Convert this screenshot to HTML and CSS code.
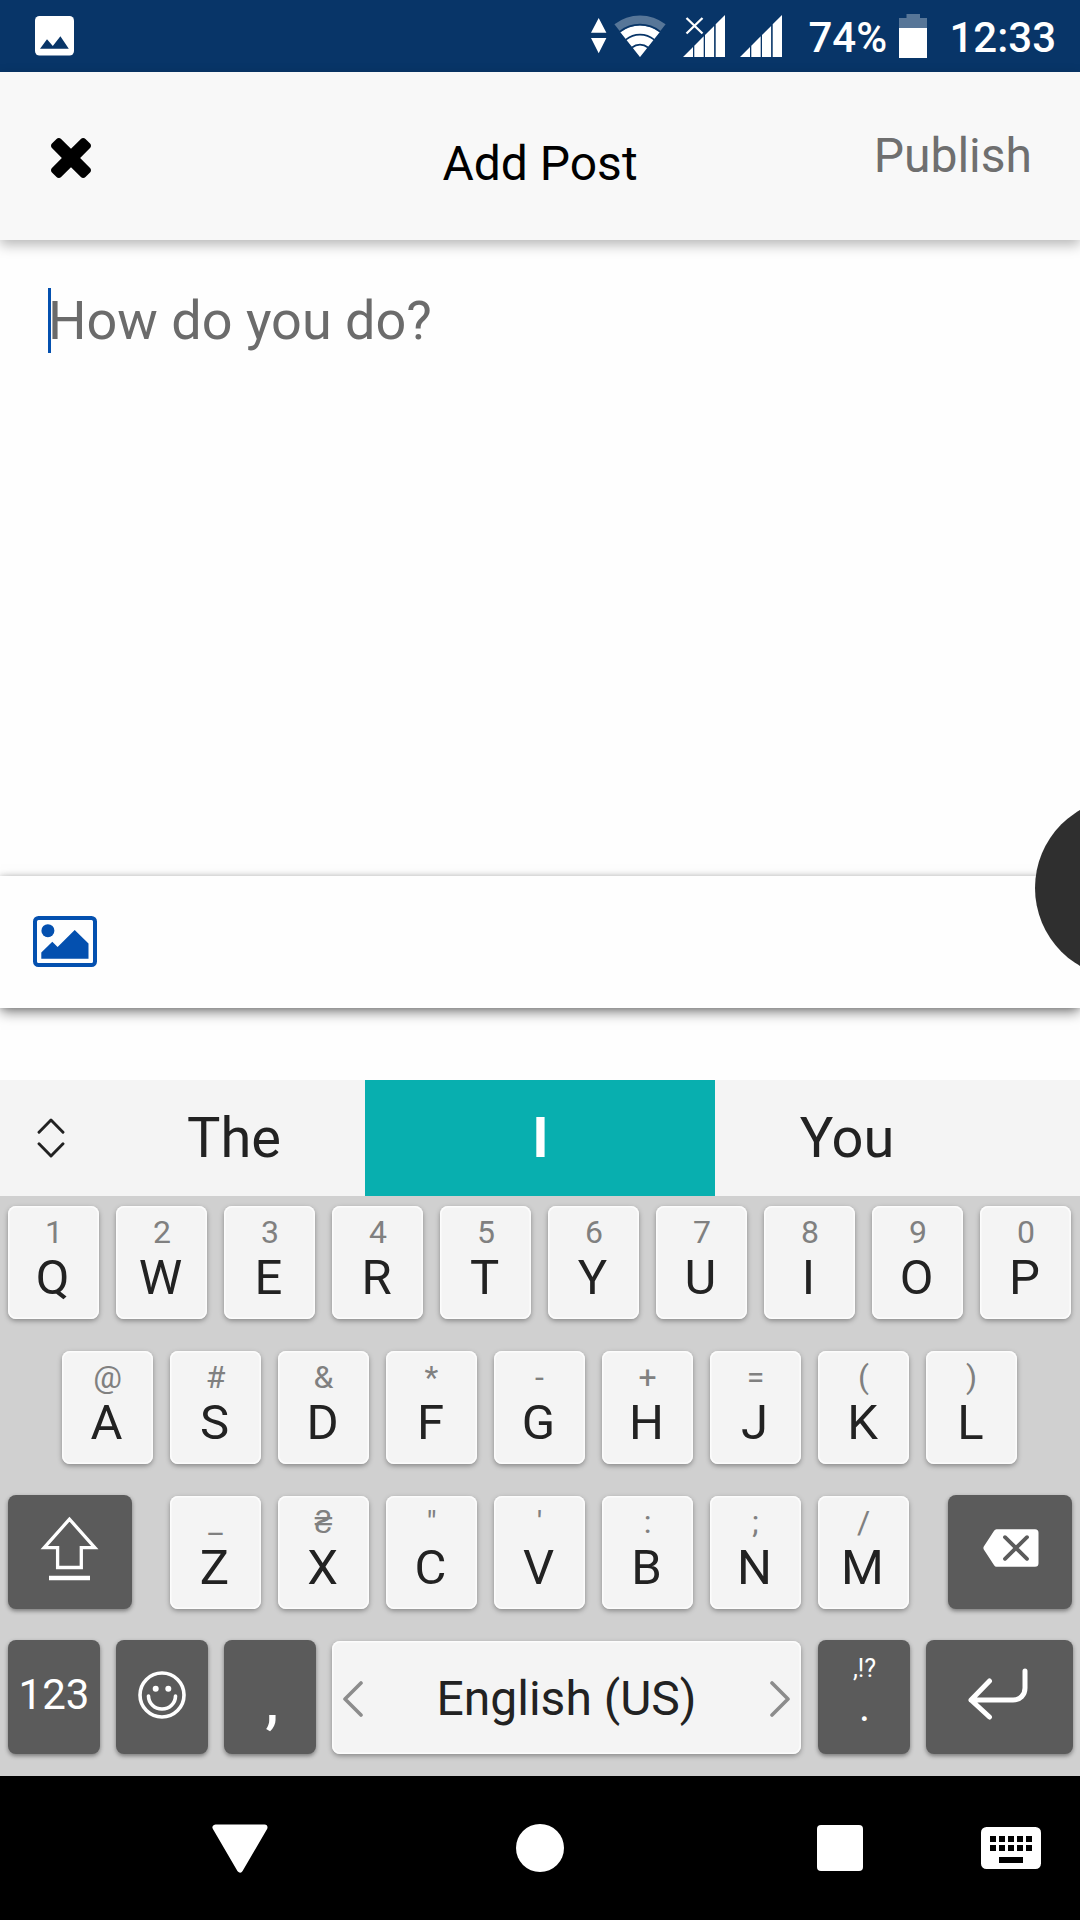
FILE: index.html
```html
<!DOCTYPE html>
<html lang="en">
<head>
<meta charset="utf-8">
<title>Add Post</title>
<link rel="stylesheet" href="styles.css">
</head>
<body>
<div class="screen">
  <header class="status">
    <svg class="status-photo" width="39" height="40" viewBox="0 0 39 40"><rect width="39" height="39.5" rx="4.5" fill="#fff"/><path d="M5 32.8 12 23.3l5.8 6.7 7.6-9.8 8.4 12.6z" fill="#083568"/></svg>
    <svg class="status-data" width="16" height="40" viewBox="0 0 16 40"><path d="M0 16.7 7.7 2 15.4 16.7zM0 22 7.7 37.3 15.4 22z" fill="#fff"/></svg>
    <svg class="status-wifi" width="52" height="44" viewBox="0 0 52 44">
      <path d="M0.4 10.3a42 42 0 0 1 51.2 0L26 43z" fill="#fff" opacity=".32"/>
      <path d="M6.4 18.3a31.8 31.8 0 0 1 39.2 0L26 43z" fill="#fff"/>
      <path d="M5.9 17.6a32.6 32.6 0 0 1 40.2 0M11.9 25.6a22.5 22.5 0 0 1 28.2 0M18 33.5a12.5 12.5 0 0 1 16 0" fill="none" stroke="#083568" stroke-width="1.7"/>
    </svg>
    <svg class="status-sim1" width="42" height="42" viewBox="0 0 42 42"><path d="M0 42 10 32V42zM11.300 30.700l9.400-9.400V42h-9.400zM22 20 31.100 10.900V42H22zM32.700 9.300 42 0v42h-9.300z" fill="#fff"/><path d="m3.500 3 16 15.500M19.500 3l-16 15.500" stroke="#fff" stroke-width="2.300"/></svg>
    <svg class="status-sim2" width="42" height="42" viewBox="0 0 42 42"><path d="M0 42 10 32V42zM11.300 30.700l9.400-9.400V42h-9.400zM22 20 31.100 10.900V42H22zM32.700 9.300 42 0v42h-9.300z" fill="#fff"/></svg>
    <span class="status-text percent">74%</span>
    <svg class="status-battery" width="28" height="44" viewBox="0 0 28 44"><path d="M7.500 0h13.500v4H28v10H0V4h7.500z" fill="#fff" opacity=".32"/><path d="M0 14h28v30H0z" fill="#fff"/></svg>
    <span class="status-text clock">12:33</span>
  </header>

  <nav class="appbar">
    <svg class="close" width="40" height="40" viewBox="302 366 1188 1188"><path d="M1490 1322q0 40-28 68l-136 136q-28 28-68 28t-68-28l-294-294-294 294q-28 28-68 28t-68-28l-136-136q-28-28-28-68t28-68l294-294-294-294q-28-28-28-68t28-68l136-136q28-28 68-28t68 28l294 294 294-294q28-28 68-28t68 28l136 136q28 28 28 68t-28 68l-294 294 294 294q28 28 28 68z"/></svg>
    <span class="title">Add Post</span>
    <span class="publish">Publish</span>
  </nav>

  <main class="editor">
    <div class="caret"></div>
    <div class="placeholder">How do you do?</div>
  </main>

  <div class="attach">
    <svg width="64" height="51" viewBox="0 0 64 51"><rect x="2" y="2" width="60" height="47" rx="3.500" fill="none" stroke="#0450af" stroke-width="4"/><circle cx="14.900" cy="14.700" r="6.500" fill="#0450af"/><path d="M8.300 42.700v-6.200L19.300 25.700l5.300 5.200L41.700 14 55.500 27.500v15.200z" fill="#0450af"/></svg>
    <div class="bubble"></div>
  </div>

  <div class="suggestions">
    <div class="expand"><svg width="28" height="40" viewBox="0 0 28 40"><path d="M2 14.200 14 2l12 12.200M2 25.800 14 38l12-12.200" fill="none" stroke="#222" stroke-width="2.900" stroke-linecap="round" stroke-linejoin="round"/></svg></div>
    <div class="word">The</div>
    <div class="word word-active">I</div>
    <div class="word">You</div>
  </div>

  <section class="keyboard">
    <div class="row row-top">
      <div class="key"><small>1</small><b>Q</b></div><div class="key"><small>2</small><b>W</b></div><div class="key"><small>3</small><b>E</b></div><div class="key"><small>4</small><b>R</b></div><div class="key"><small>5</small><b>T</b></div><div class="key"><small>6</small><b>Y</b></div><div class="key"><small>7</small><b>U</b></div><div class="key"><small>8</small><b>I</b></div><div class="key"><small>9</small><b>O</b></div><div class="key"><small>0</small><b>P</b></div>
    </div>
    <div class="row row-home">
      <div class="key"><small>@</small><b>A</b></div><div class="key"><small>#</small><b>S</b></div><div class="key"><small>&amp;</small><b>D</b></div><div class="key"><small>*</small><b>F</b></div><div class="key"><small>-</small><b>G</b></div><div class="key"><small>+</small><b>H</b></div><div class="key"><small>=</small><b>J</b></div><div class="key"><small>(</small><b>K</b></div><div class="key"><small>)</small><b>L</b></div>
    </div>
    <div class="row row-split">
      <div class="dark wide"><svg class="shift" width="60" height="66" viewBox="0 0 60 66"><path d="M29.500 3.200 4.200 31.600h13.400v19.900h23.700V31.600h13.500z" fill="none" stroke="#fff" stroke-width="3.300"/><path d="M9 62h41" stroke="#fff" stroke-width="4.600"/></svg></div>
      <div class="letters">
        <div class="key"><small>_</small><b>Z</b></div><div class="key"><small>₴</small><b>X</b></div><div class="key"><small>"</small><b>C</b></div><div class="key"><small>'</small><b>V</b></div><div class="key"><small>:</small><b>B</b></div><div class="key"><small>;</small><b>N</b></div><div class="key"><small>/</small><b>M</b></div>
      </div>
      <div class="dark wide"><svg class="erase" width="56" height="38" viewBox="0 0 56 38"><path d="M13.500.300H52a3.500 3.500 0 0 1 3.500 3.500v30.400a3.500 3.500 0 0 1-3.500 3.500H13.500q-1.500 0-2.400-1.500L.800 20.400q-.800-1.400 0-2.800L11.100 1.800Q12 .300 13.500.300z" fill="#fff"/><path d="m22 8.200 22 21.600M44 8.200 22 29.800" stroke="#5b5b5b" stroke-width="3.800" stroke-linecap="round"/></svg></div>
    </div>
    <div class="row row-bottom">
      <div class="dark"><span class="numeric">123</span></div>
      <div class="dark"><svg class="smile" width="50" height="50" viewBox="0 0 50 50"><g fill="none" stroke="#fff" stroke-width="3.600"><circle cx="25" cy="25" r="22"/><path d="M11.500 26a13.500 13 0 0 0 27 0" stroke-linecap="round"/></g><circle cx="18.700" cy="18.700" r="3" fill="#fff"/><circle cx="31.300" cy="18.700" r="3" fill="#fff"/></svg></div>
      <div class="dark"><span class="comma">,</span></div>
      <div class="key space"><svg width="20" height="36" viewBox="0 0 20 36"><path d="M18 2 2 18l16 16" fill="none" stroke="#8c8c8c" stroke-width="3.600" stroke-linecap="round" stroke-linejoin="round"/></svg><span>English (US)</span><svg width="20" height="36" viewBox="0 0 20 36"><path d="m2 2 16 16L2 34" fill="none" stroke="#8c8c8c" stroke-width="3.600" stroke-linecap="round" stroke-linejoin="round"/></svg></div>
      <div class="dark punct"><span>,!?</span><span class="dot">.</span></div>
      <div class="dark enter"><svg width="60" height="52" viewBox="0 0 60 52"><path d="M57 3v17c0 7-5 12-12 12H3M21.500 13 3 32l18.500 17" fill="none" stroke="#fff" stroke-width="5" stroke-linecap="round" stroke-linejoin="round"/></svg></div>
    </div>
  </section>

  <footer class="navbar">
    <svg class="nav-back" width="56" height="49" viewBox="0 0 56 49"><path d="M3.500 3.500h49L28 45.500z" fill="#fff" stroke="#fff" stroke-width="6" stroke-linejoin="round"/></svg>
    <div class="nav-home"></div>
    <div class="nav-recent"></div>
    <svg class="nav-keyboard" width="60" height="42" viewBox="0 0 60 42"><rect width="60" height="42" rx="5.500" fill="#fff"/><path d="M9 9h6v6H9zm9 0h6v6h-6zm9 0h6v6h-6zm9 0h6v6h-6zm9 0h6v6h-6zM9 18h6v6H9zm9 0h6v6h-6zm9 0h6v6h-6zm9 0h6v6h-6zm9 0h6v6h-6zM18 30h24v6H18z"/></svg>
  </footer>
</div>
</body>
</html>
```
FILE: styles.css
```css
* { box-sizing: border-box; }
body { margin: 0; font-family: Roboto, "Liberation Sans", sans-serif; }
svg { display: block; flex: none; }

.screen {
  width: 1080px;
  height: 1920px;
  overflow: hidden;
  display: flex;
  flex-direction: column;
  background: #fefefe;
}

/* System status bar */
.status {
  height: 72px;
  flex: none;
  display: flex;
  align-items: flex-start;
  background: #083568;
  color: #fff;
}
.status-photo { margin: 16px 0 0 34.500px; }
.status-data { margin: 16px 0 0 517.200px; }
.status-wifi { margin: 14px 0 0 7.300px; }
.status-sim1 { margin: 15px 0 0 17.500px; }
.status-sim2 { margin: 15px 0 0 15px; }
.status-text { font-size: 42px; font-weight: 500; line-height: 76px; white-space: nowrap; }
.percent { width: 91px; margin-left: 26px; }
.status-battery { margin-top: 14px; }
.clock { margin-left: 22px; }

/* Title bar */
.appbar {
  height: 168px;
  flex: none;
  display: grid;
  grid-template-columns: 1fr auto 1fr;
  align-items: center;
  padding: 0 48px;
  background: #f8f8f8;
  box-shadow: 0 5px 12px rgba(0, 0, 0, .28);
  font-size: 48px;
  line-height: 56px;
}
.close { margin: 3px 0 0 3px; }
.title { padding-top: 15px; }
.publish { justify-self: end; color: #6f6f6f; }

/* Post text area */
.editor {
  height: 636px;
  flex: none;
  display: flex;
  align-items: flex-start;
  padding: 48px;
}
.caret { width: 3px; height: 65px; margin-right: -3px; background: #0450af; }
.placeholder { font-size: 54px; line-height: 65px; color: #6b6b6b; }

/* Attachment bar */
.attach {
  position: relative;
  height: 132px;
  flex: none;
  display: flex;
  align-items: center;
  padding: 0 33px 1px;
  background: #fefefe;
  box-shadow: 0 5px 12px -1px rgba(0, 0, 0, .5), 0 0 6px rgba(0, 0, 0, .16);
}
.bubble {
  position: absolute;
  left: 1035px;
  top: -78px;
  width: 180px;
  height: 180px;
  border-radius: 50%;
  background: #2f2f2f;
}

/* Word suggestions */
.suggestions {
  height: 116px;
  flex: none;
  display: grid;
  grid-template-columns: 102px 263px 350px 263px;
  margin-top: 72px;
  background: #f4f4f4;
  color: #222;
  font-size: 56px;
  line-height: 116px;
  text-align: center;
}
.expand { display: flex; align-items: center; justify-content: center; }
.word { padding-left: 1px; }
.word-active { background: #08afaf; color: #fff; font-weight: 700; }

/* Keyboard */
.keyboard {
  height: 580px;
  flex: none;
  display: flex;
  flex-direction: column;
  gap: 32px;
  padding-top: 10px;
  background: #d0d0d0;
}
.row { display: flex; gap: 17px; height: 113px; padding: 0 8px; }
.row-home { padding-left: 62px; }
.row-split { justify-content: space-between; gap: 0; }
.letters { display: flex; gap: 17px; margin-right: 1px; }
.row-bottom { gap: 16px; }
.key {
  width: 91px;
  height: 113px;
  flex: none;
  padding-top: 8px;
  border-radius: 8px;
  background: #f4f4f4;
  box-shadow: inset 0 0 0 1.500px #fcfcfc, 0 2px 5px rgba(0, 0, 0, .34);
  color: #222;
  text-align: center;
}
.key small { display: block; font-size: 32px; line-height: 36px; color: #808080; }
.row-top small { padding-left: 1px; }
.key b { display: block; margin-top: 3px; padding-right: 2px; font-size: 49px; line-height: 50px; font-weight: 400; }
.dark {
  width: 92px;
  height: 114px;
  flex: none;
  display: flex;
  align-items: center;
  justify-content: center;
  margin-top: -1px;
  border-radius: 8px;
  background: #5b5b5b;
  box-shadow: 0 2px 4px rgba(0, 0, 0, .42);
  color: #fff;
}
.wide { width: 124px; }
.shift { margin-bottom: 7px; }
.erase { margin: 0 0 8px 1px; }
.numeric { font-size: 42px; line-height: 50px; margin-bottom: 4px; }
.smile { margin-bottom: 5px; }
.comma { font-size: 60px; line-height: 70px; font-weight: 500; margin: 10px 0 0 4px; }
.space {
  width: 469px;
  display: flex;
  align-items: center;
  justify-content: space-between;
  padding: 2px 11px 0;
  margin-right: 1px;
  font-size: 48px;
}
.punct { flex-direction: column; justify-content: flex-start; font-size: 25px; line-height: 30px; padding: 14px 0 0 1px; }
.dot { font-size: 42px; line-height: 40px; margin-top: 3px; }
.enter { width: 147px; }
.enter svg { margin: 0 0 7px -4px; }

/* System navigation */
.navbar {
  flex: 1;
  display: flex;
  align-items: center;
  padding-left: 212px;
  background: #000;
}
.nav-home { width: 48px; height: 48px; margin-left: 248px; border-radius: 50%; background: #fff; }
.nav-recent { width: 46px; height: 46px; margin-left: 253px; border-radius: 4px; background: #fff; }
.nav-keyboard { margin-left: 118px; }
```
